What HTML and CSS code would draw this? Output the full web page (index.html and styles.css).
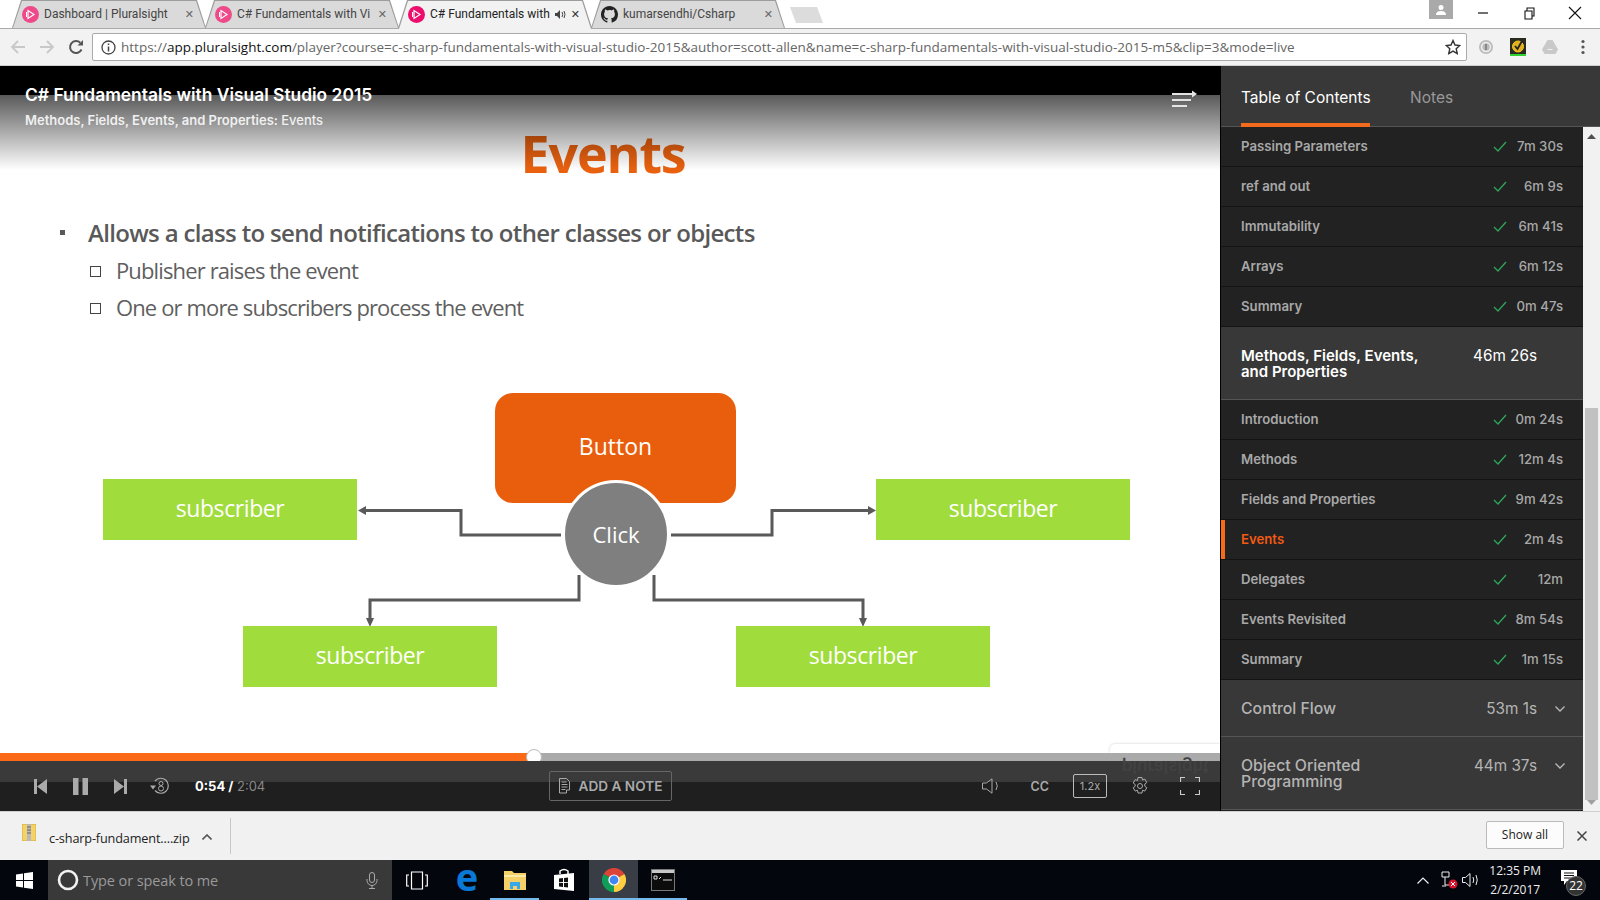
FILE: index.html
```html
<!DOCTYPE html>
<html lang="en">
<head>
<meta charset="utf-8">
<title>C# Fundamentals with Visual Studio 2015</title>
<link rel="stylesheet" href="styles.css">
</head>
<body>
<div class="tabstrip">
  <div class="tab">
    <svg class="favicon" width="17" height="17" viewBox="0 0 17 17"><circle cx="8.5" cy="8.5" r="8.5" fill="#ee4a8a"/><path d="M6 4.5v8l6-4z" fill="none" stroke="#fff" stroke-width="1.2"/><path d="M4.5 6v5" stroke="#fff"/></svg>
    <span class="tab-title">Dashboard | Pluralsight</span><span class="tab-x">✕</span>
  </div>
  <div class="tab">
    <svg class="favicon" width="17" height="17" viewBox="0 0 17 17"><circle cx="8.5" cy="8.5" r="8.5" fill="#ee4a8a"/><path d="M6 4.5v8l6-4z" fill="none" stroke="#fff" stroke-width="1.2"/><path d="M4.5 6v5" stroke="#fff"/></svg>
    <span class="tab-title">C# Fundamentals with Vi</span><span class="tab-x">✕</span>
  </div>
  <div class="tab tab-active">
    <svg class="favicon" width="17" height="17" viewBox="0 0 17 17"><circle cx="8.5" cy="8.5" r="8.5" fill="#ec0d6c"/><path d="M6 4.5v8l6-4z" fill="none" stroke="#fff" stroke-width="1.2"/><path d="M4.5 6v5" stroke="#fff"/></svg>
    <span class="tab-title">C# Fundamentals with</span>
    <svg class="tab-sound" width="11" height="11" viewBox="0 0 11 11"><path d="M0 4h2l3-3v9L2 7H0z" fill="#444"/><path d="M7 3q1.500 2.500 0 5M9 2q2 3.500 0 7" fill="none" stroke="#444"/></svg>
    <span class="tab-x tab-x-dark">✕</span>
  </div>
  <div class="tab">
    <svg class="favicon" width="17" height="17" viewBox="0 0 16 16"><path fill="#222" d="M8 0C3.580 0 0 3.580 0 8c0 3.540 2.290 6.530 5.470 7.590.4.070.55-.17.55-.38v-1.340c-2.230.48-2.700-1.070-2.700-1.070-.360-.930-.890-1.170-.890-1.170-.730-.500.050-.490.050-.490.800.060 1.230.830 1.230.830.710 1.220 1.870.870 2.330.660.070-.520.280-.870.510-1.070-1.780-.2-3.640-.890-3.640-3.950 0-.870.310-1.590.820-2.150-.080-.2-.360-1.020.080-2.120 0 0 .670-.210 2.200.820A7.600 7.600 0 0 1 8 3.870c.680 0 1.360.090 2 .270 1.530-1.040 2.200-.820 2.200-.820.440 1.100.160 1.920.080 2.120.510.560.820 1.270.820 2.150 0 3.070-1.870 3.750-3.650 3.950.290.250.540.730.540 1.480v2.190c0 .210.150.460.550.380A8 8 0 0 0 16 8c0-4.420-3.580-8-8-8z"/></svg>
    <span class="tab-title">kumarsendhi/Csharp</span><span class="tab-x">✕</span>
  </div>
  <div class="newtab"></div>
  <div class="window-controls">
    <div class="avatar"><svg width="12" height="12" viewBox="0 0 12 12"><circle cx="6" cy="3.500" r="2.500" fill="#fff"/><path d="M1 11q0-4 5-4t5 4z" fill="#fff"/></svg></div>
    <svg class="win-btn" width="46" height="28" viewBox="0 0 46 28"><path d="M18 13h10" stroke="#111" stroke-width="1.200"/></svg>
    <svg class="win-btn" width="46" height="28" viewBox="0 0 46 28"><path d="M19 11h7v8h-7zM21 11V8h7v8h-2" fill="none" stroke="#111" stroke-width="1.100"/></svg>
    <svg class="win-btn" width="46" height="28" viewBox="0 0 46 28"><path d="M17 7l12 12M29 7L17 19" stroke="#111" stroke-width="1.100"/></svg>
  </div>
</div>

<div class="toolbar">
  <svg class="nav-icon" width="16" height="16" viewBox="0 0 16 16"><path d="M15 8H2M8 2L2 8l6 6" fill="none" stroke="#c8c8c8" stroke-width="1.800"/></svg>
  <svg class="nav-icon" width="16" height="16" viewBox="0 0 16 16"><path d="M1 8h13M8 2l6 6-6 6" fill="none" stroke="#c8c8c8" stroke-width="1.800"/></svg>
  <svg class="nav-icon" width="16" height="16" viewBox="0 0 16 16"><path d="M13.500 10.500A6 6 0 1 1 12.300 3.800" fill="none" stroke="#555" stroke-width="2"/><path d="M9.500 6.500H15V1z" fill="#555"/></svg>
  <div class="omnibox">
    <svg class="info" width="15" height="15" viewBox="0 0 15 15"><circle cx="7.500" cy="7.500" r="6.500" fill="none" stroke="#444" stroke-width="1.300"/><path d="M7.500 6.500v5M7.500 3.500v1.600" stroke="#444" stroke-width="1.500"/></svg>
    <span class="url"><span class="url-dim">https://</span>app.pluralsight.com<span class="url-dim">/player?course=c-sharp-fundamentals-with-visual-studio-2015&amp;author=scott-allen&amp;name=c-sharp-fundamentals-with-visual-studio-2015-m5&amp;clip=3&amp;mode=live</span></span>
    <svg class="star" width="16" height="16" viewBox="0 0 16 16"><path d="M8 1.500l2 4.500 4.800.500-3.600 3.200 1 4.800L8 12.100l-4.200 2.400 1-4.800L1.200 6.500 6 6z" fill="none" stroke="#333" stroke-width="1.400"/></svg>
  </div>
  <div class="ext-icons">
    <svg width="16" height="16" viewBox="0 0 16 16"><circle cx="8" cy="8" r="7" fill="#bbb"/><circle cx="8" cy="8" r="4.500" fill="none" stroke="#eee" stroke-width="1.500"/><path d="M8 5v6" stroke="#888" stroke-width="2"/></svg>
    <svg width="16" height="18" viewBox="0 0 16 18"><rect width="16" height="16" fill="#2a2a20"/><rect y="16" width="16" height="2" fill="#2fd02f"/><circle cx="8" cy="8.500" r="5.500" fill="#e0b020" stroke="#f5c518" stroke-width="1"/><path d="M5 8l2.500 3L12 3" fill="none" stroke="#222" stroke-width="1.800"/></svg>
    <svg width="16" height="16" viewBox="0 0 16 16"><path d="M5.500 1h5L16 10.500 13.500 15h-11L0 10.500z" fill="#c9c9c9"/><path d="M5.500 10.500h5" stroke="#f2f2f2"/></svg>
    <svg class="kebab" width="4" height="16" viewBox="0 0 4 16"><circle cx="2" cy="2.500" r="1.600" fill="#555"/><circle cx="2" cy="8" r="1.600" fill="#555"/><circle cx="2" cy="13.500" r="1.600" fill="#555"/></svg>
  </div>
</div>

<div class="main">
  <div class="player">
    <div class="stage">
      <div class="black-strip"></div>
      <div class="slide">
        <h1 class="slide-title">Events</h1>
        <div class="bullet"><span class="bullet-mark"></span>Allows a class to send notifications to other classes or objects</div>
        <div class="sub-bullet"><span class="sub-mark"></span>Publisher raises the event</div>
        <div class="sub-bullet"><span class="sub-mark"></span>One or more subscribers process the event</div>
        <div class="diagram">
          <div class="node-button">Button</div>
          <svg class="wires" width="1220" height="320" viewBox="0 0 1220 320">
            <g fill="none" stroke="#595959" stroke-width="3">
              <path d="M561 155H461V130.500H364"/>
              <path d="M671 155H772V130.500H870"/>
              <path d="M579 195V220H370V240"/>
              <path d="M654 195V220H863V240"/>
            </g>
            <g fill="#595959">
              <path d="M358 130.500l8-4.500v9z"/>
              <path d="M876 130.500l-8-4.500v9z"/>
              <path d="M370 247l-4-9h8z"/>
              <path d="M863 247l-4-9h8z"/>
            </g>
          </svg>
          <div class="node-click">Click</div>
          <div class="sub-node sn-left">subscriber</div>
          <div class="sub-node sn-right">subscriber</div>
          <div class="sub-node sn-bl">subscriber</div>
          <div class="sub-node sn-br">subscriber</div>
        </div>
      </div>
      <div class="shade"></div>
      <div class="course-head">
        <div class="course-title">C# Fundamentals with Visual Studio 2015</div>
        <div class="course-sub">Methods, Fields, Events, and Properties: <span class="course-sub-light">Events</span></div>
      </div>
      <svg class="menu-icon" width="25" height="18" viewBox="0 0 25 18"><g stroke="#e4e4e4" stroke-width="2" fill="none"><path d="M0 5h17M0 11h19M0 17h15M2 5h21"/></g><path d="M25 5l-5-3.500v7z" fill="#e4e4e4"/></svg>
      <div class="ghost-tip"></div>
    </div>
    <div class="progress"><div class="progress-done"></div><div class="knob"></div></div>
    <div class="controls">
      <div class="ghost-text">pluralsight</div>
      <svg class="c-prev" width="13" height="15" viewBox="0 0 13 15"><path d="M0 0h3v15H0zM13 0v15L3 7.500z" fill="#aaa"/></svg>
      <svg class="c-pause" width="15" height="17" viewBox="0 0 15 17"><path d="M0 0h5.500v17H0zM9.500 0H15v17H9.500z" fill="#aaa"/></svg>
      <svg class="c-next" width="13" height="15" viewBox="0 0 13 15"><path d="M13 0h-3v15h3zM0 0v15l10-7.500z" fill="#aaa"/></svg>
      <svg class="c-replay" width="20" height="18" viewBox="0 0 20 18"><path d="M5 13.500A7.500 7.500 0 1 0 5 4" fill="none" stroke="#aaa" stroke-width="1.200"/><path d="M0 8.500h6l-3 4z" fill="#aaa"/><circle cx="11" cy="6.500" r="2" fill="none" stroke="#aaa"/><circle cx="11" cy="11.500" r="2.500" fill="none" stroke="#aaa"/></svg>
      <div class="time"><b>0:54 /</b> <span class="time-total">2:04</span></div>
      <button class="add-note">
        <svg width="12" height="16" viewBox="0 0 12 16"><path d="M.5.500h7l3 3V12h-3v3H.5zM2.500 4h5M2.500 6.500h6M2.500 9h6M2.500 11.500h4" fill="none" stroke="#aaa"/></svg>
        ADD A NOTE
      </button>
      <div class="c-right">
        <svg width="19" height="16" viewBox="0 0 19 16"><path d="M.5 5h4L10 .8v14.400L4.500 11h-4zM14 4q2.500 4 0 8" fill="none" stroke="#aaa"/></svg>
        <span class="cc">CC</span>
        <span class="speed">1.2x</span>
        <svg width="18" height="18" viewBox="0 0 18 18"><path d="M7 .5h4l.5 2.500 2.300-.9 2 3.400-2 1.500v2.200l2 1.500-2 3.400-2.300-.9-.5 2.800H7l-.5-2.800-2.300.9-2-3.400 2-1.500V7.500l-2-1.500 2-3.400 2.300.9z" fill="none" stroke="#aaa"/><circle cx="9" cy="9" r="2.500" fill="none" stroke="#aaa"/></svg>
        <svg width="20" height="18" viewBox="0 0 20 18"><path d="M.5 5V.5H5M15 .5h4.500V5M19.500 13v4.500H15M5 17.500H.5V13" fill="none" stroke="#ccc" stroke-width="1.200"/></svg>
      </div>
    </div>
  </div>

  <aside class="sidebar">
    <div class="side-tabs">
      <div class="side-tab side-tab-on">Table of Contents</div>
      <div class="side-tab">Notes</div>
    </div>
    <div class="side-body">
      <div class="toc">
        <div class="row"><span class="row-name">Passing Parameters</span><svg class="check" width="14" height="11" viewBox="0 0 14 11"><path d="M1 6l4 4 8-9" fill="none" stroke="#2ea55e" stroke-width="1.300"/></svg><span class="row-time">7m 30s</span></div>
        <div class="row"><span class="row-name">ref and out</span><svg class="check" width="14" height="11" viewBox="0 0 14 11"><path d="M1 6l4 4 8-9" fill="none" stroke="#2ea55e" stroke-width="1.300"/></svg><span class="row-time">6m 9s</span></div>
        <div class="row"><span class="row-name">Immutability</span><svg class="check" width="14" height="11" viewBox="0 0 14 11"><path d="M1 6l4 4 8-9" fill="none" stroke="#2ea55e" stroke-width="1.300"/></svg><span class="row-time">6m 41s</span></div>
        <div class="row"><span class="row-name">Arrays</span><svg class="check" width="14" height="11" viewBox="0 0 14 11"><path d="M1 6l4 4 8-9" fill="none" stroke="#2ea55e" stroke-width="1.300"/></svg><span class="row-time">6m 12s</span></div>
        <div class="row"><span class="row-name">Summary</span><svg class="check" width="14" height="11" viewBox="0 0 14 11"><path d="M1 6l4 4 8-9" fill="none" stroke="#2ea55e" stroke-width="1.300"/></svg><span class="row-time">0m 47s</span></div>
        <div class="section section-open">
          <span class="section-name">Methods, Fields, Events, and Properties</span>
          <span class="section-time">46m 26s</span>
          <span class="chev-space"></span>
        </div>
        <div class="row"><span class="row-name">Introduction</span><svg class="check" width="14" height="11" viewBox="0 0 14 11"><path d="M1 6l4 4 8-9" fill="none" stroke="#2ea55e" stroke-width="1.300"/></svg><span class="row-time">0m 24s</span></div>
        <div class="row"><span class="row-name">Methods</span><svg class="check" width="14" height="11" viewBox="0 0 14 11"><path d="M1 6l4 4 8-9" fill="none" stroke="#2ea55e" stroke-width="1.300"/></svg><span class="row-time">12m 4s</span></div>
        <div class="row"><span class="row-name">Fields and Properties</span><svg class="check" width="14" height="11" viewBox="0 0 14 11"><path d="M1 6l4 4 8-9" fill="none" stroke="#2ea55e" stroke-width="1.300"/></svg><span class="row-time">9m 42s</span></div>
        <div class="row row-current"><span class="row-name">Events</span><svg class="check" width="14" height="11" viewBox="0 0 14 11"><path d="M1 6l4 4 8-9" fill="none" stroke="#2ea55e" stroke-width="1.300"/></svg><span class="row-time">2m 4s</span></div>
        <div class="row"><span class="row-name">Delegates</span><svg class="check" width="14" height="11" viewBox="0 0 14 11"><path d="M1 6l4 4 8-9" fill="none" stroke="#2ea55e" stroke-width="1.300"/></svg><span class="row-time">12m</span></div>
        <div class="row"><span class="row-name">Events Revisited</span><svg class="check" width="14" height="11" viewBox="0 0 14 11"><path d="M1 6l4 4 8-9" fill="none" stroke="#2ea55e" stroke-width="1.300"/></svg><span class="row-time">8m 54s</span></div>
        <div class="row"><span class="row-name">Summary</span><svg class="check" width="14" height="11" viewBox="0 0 14 11"><path d="M1 6l4 4 8-9" fill="none" stroke="#2ea55e" stroke-width="1.300"/></svg><span class="row-time">1m 15s</span></div>
        <div class="section">
          <span class="section-name">Control Flow</span>
          <span class="section-time">53m 1s</span>
          <svg class="chev" width="10" height="6" viewBox="0 0 10 6"><path d="M.5.500L5 5 9.500.500" fill="none" stroke="#bbb" stroke-width="1.300"/></svg>
        </div>
        <div class="section">
          <span class="section-name">Object Oriented Programming</span>
          <span class="section-time">44m 37s</span>
          <svg class="chev" width="10" height="6" viewBox="0 0 10 6"><path d="M.5.500L5 5 9.500.500" fill="none" stroke="#bbb" stroke-width="1.300"/></svg>
        </div>
      </div>
      <div class="scrollbar">
        <svg class="sb-arrow" width="9" height="5" viewBox="0 0 9 5"><path d="M4.500 0L9 5H0z" fill="#505050"/></svg>
        <div class="sb-gap"></div>
        <div class="sb-thumb"></div>
        <svg class="sb-arrow" width="9" height="5" viewBox="0 0 9 5"><path d="M4.500 5L9 0H0z" fill="#a0a0a0"/></svg>
      </div>
    </div>
  </aside>
</div>

<div class="downloads">
  <svg class="zip" width="14" height="17" viewBox="0 0 14 17"><rect width="14" height="17" fill="#f3d268"/><rect x="0" y="0" width="14" height="17" fill="none" stroke="#d6ae3f"/><rect x="5" y="0" width="4" height="17" fill="#b9b9b9"/><path d="M5 3h4M5 6h4M5 9h4" stroke="#666"/></svg>
  <span class="dl-name">c-sharp-fundament....zip</span>
  <svg class="dl-caret" width="10" height="6" viewBox="0 0 10 6"><path d="M.5 5.500L5 1l4.500 4.500" fill="none" stroke="#555" stroke-width="1.600"/></svg>
  <span class="dl-sep"></span>
  <button class="show-all">Show all</button>
  <svg class="dl-close" width="10" height="10" viewBox="0 0 10 10"><path d="M.5.500l9 9M9.500.500l-9 9" stroke="#444" stroke-width="1.500"/></svg>
</div>

<div class="taskbar">
  <svg class="start" width="17" height="17" viewBox="0 0 17 17"><path d="M0 2.500l7-1v6.500H0zM8 1.300L17 0v8H8zM0 9h7v6.500l-7-1zM8 9h9v8l-9-1.300z" fill="#fff"/></svg>
  <div class="search">
    <svg width="22" height="22" viewBox="0 0 22 22"><circle cx="11" cy="11" r="9" fill="none" stroke="#f2f2f2" stroke-width="2.600"/></svg>
    <span class="search-text">Type or speak to me</span>
    <svg class="mic" width="12" height="17" viewBox="0 0 12 17"><rect x="3.500" y=".5" width="5" height="10" rx="2.500" fill="none" stroke="#aaa"/><path d="M1 7v1.500a5 5 0 0 0 10 0V7M6 13.500V16M3 16.500h6" fill="none" stroke="#aaa"/></svg>
  </div>
  <div class="task-item"><svg width="22" height="19" viewBox="0 0 22 19"><path d="M5.500 1h11v17h-11zM3 4H.7v11H3M19 4h2.300v11H19" fill="none" stroke="#fff" stroke-width="1.200"/></svg></div>
  <div class="task-item task-edge"><span class="edge-e">e</span></div>
  <div class="task-item task-run"><svg width="22" height="22" viewBox="0 0 22 22"><path d="M0 2h8l2 2h12v17H0z" fill="#f5cf67"/><path d="M0 6h22v2H0z" fill="#fbe9a9"/><path d="M6 20v-7h10v7h-3v-3H9v3z" fill="#38a8e8"/></svg></div>
  <div class="task-item"><svg width="22" height="24" viewBox="0 0 22 24"><path d="M1 7l20-2v18L1 21z" fill="#fff"/><path d="M7 6V3q4-3 8 0v3" fill="none" stroke="#fff" stroke-width="1.500"/><path d="M6 10.500l4-.4v4l-4 .1zM11 10l4-.4v4.400l-4 .1zM6 15l4-.1v4L6 18.500zM11 14.900l4-.1v4.600l-4-.4z" fill="#111"/></svg></div>
  <div class="task-item task-chrome task-run">
    <svg width="24" height="24" viewBox="0 0 24 24"><path d="M12 12L1.600 6A12 12 0 0 1 22.400 6z" fill="#db4437"/><path d="M12 12L22.400 6A12 12 0 0 1 12 24z" fill="#ffcd40"/><path d="M12 12V24A12 12 0 0 1 1.600 6z" fill="#0f9d58"/><circle cx="12" cy="12" r="5.600" fill="#fff"/><circle cx="12" cy="12" r="4.400" fill="#4285f4"/></svg>
  </div>
  <div class="task-item task-cmd task-run">
    <svg width="24" height="24" viewBox="0 0 24 24"><rect x=".5" y="1.500" width="23" height="21" fill="#0c0c0c" stroke="#777"/><rect x="1" y="2" width="22" height="3" fill="#c8c8c8"/><path d="M3 8h3v3H3zM8 11l2-2M12 12h9" stroke="#ddd" fill="none"/></svg>
  </div>
  <div class="tray">
    <svg width="12" height="7" viewBox="0 0 12 7"><path d="M.5 6.500L6 1l5.500 5.500" fill="none" stroke="#eee" stroke-width="1.200"/></svg>
    <svg class="tray-net" width="17" height="18" viewBox="0 0 17 18"><path d="M1 1h7v5H1zM4 6v8h6M1 15h4" fill="none" stroke="#eee"/><circle cx="12" cy="13" r="4.500" fill="#d4162c"/><path d="M10 11l4 4M14 11l-4 4" stroke="#fff"/></svg>
    <svg class="tray-vol" width="18" height="16" viewBox="0 0 18 16"><path d="M.5 5.500h3L8 1.500v13l-4.500-4h-3zM11 5q1.500 3 0 6M14 3q2.500 5 0 10" fill="none" stroke="#eee"/></svg>
    <div class="clock"><div>12:35 PM</div><div>2/2/2017</div></div>
    <div class="notify">
      <svg width="16" height="15" viewBox="0 0 16 15"><path d="M0 0h16v11H6l-3 4v-4H0z" fill="#fff"/><path d="M3 3h10M3 5.500h10M3 8h7" stroke="#111"/></svg>
      <span class="notify-badge">22</span>
    </div>
  </div>
</div>
</body>
</html>
```

FILE: styles.css
```css
* { box-sizing: border-box; }
html, body { margin: 0; padding: 0; }
body {
  width: 1600px;
  height: 900px;
  overflow: hidden;
  display: flex;
  flex-direction: column;
  background: #fff;
  font-family: "Open Sans", "Liberation Sans", sans-serif;
}

/* Browser tabs */
.tabstrip {
  height: 28px;
  flex: none;
  display: flex;
  align-items: stretch;
  padding-left: 12px;
  background: #fff;
}
.tab {
  position: relative;
  width: 194px;
  margin-right: -1px;
  flex: none;
  display: flex;
  align-items: center;
  padding: 0 12px 0 10px;
  font-family: Roboto, "Liberation Sans", sans-serif;
  font-size: 12px;
  color: #444;
}
.tab::before {
  content: "";
  position: absolute;
  inset: 0;
  z-index: 0;
  background: #9c9c9c;
  clip-path: polygon(0 100%, 9px 0, calc(100% - 9px) 0, 100% 100%);
}
.tab::after {
  content: "";
  position: absolute;
  inset: 1px 1px 0 1px;
  z-index: 0;
  background: #dadada;
  clip-path: polygon(0 100%, 9px 0, calc(100% - 9px) 0, 100% 100%);
}
.tab > * { position: relative; z-index: 1; }
.tab-active { color: #222; z-index: 2; }
.tab-active::after { background: #f2f2f2; inset: 1px 1px -1px 1px; }
.favicon { flex: none; margin-right: 5px; }
.tab-title { flex: 1; white-space: nowrap; overflow: hidden; }
.tab-sound { flex: none; margin-right: 5px; }
.tab-x { flex: none; font-size: 11px; color: #666; font-family: "DejaVu Sans", sans-serif; }
.tab-x-dark { color: #333; }
.newtab {
  width: 33px;
  height: 16px;
  margin: 7px 0 0 6px;
  background: #dcdcdc;
  clip-path: polygon(0 0, calc(100% - 6px) 0, 100% 100%, 6px 100%);
}
.window-controls {
  margin-left: auto;
  display: flex;
  align-items: flex-start;
  padding-right: 2px;
}
.avatar {
  width: 24px;
  height: 19px;
  margin-right: 7px;
  background: #a9a9a9;
  display: flex;
  align-items: center;
  justify-content: center;
}
.win-btn { display: block; }

/* Toolbar */
.toolbar {
  height: 38px;
  flex: none;
  display: flex;
  align-items: center;
  padding-left: 10px;
  background: #f2f2f2;
  border-top: 1px solid #aaa;
  border-bottom: 1px solid #d0d0d0;
  gap: 13px;
}
.nav-icon { flex: none; }
.omnibox {
  width: 1375px;
  height: 28px;
  margin-left: -5px;
  flex: none;
  display: flex;
  align-items: center;
  padding: 0 5px 0 8px;
  background: #fff;
  border: 1px solid #aaa;
  border-radius: 2px;
}
.info { flex: none; margin-right: 5px; }
.url {
  flex: 1;
  white-space: nowrap;
  overflow: hidden;
  font-size: 13.5px;
  color: #111;
}
.url-dim { color: #666; }
.star { flex: none; }
.ext-icons {
  display: flex;
  align-items: center;
  gap: 16px;
  margin-left: -2px;
}
.kebab { margin-left: 7px; }

/* Main */
.main {
  flex: 1;
  min-height: 0;
  display: flex;
}
.player {
  width: 1220px;
  flex: none;
  display: flex;
  flex-direction: column;
  background: #000;
}
.stage {
  position: relative;
  flex: 1;
  min-height: 0;
  display: flex;
  flex-direction: column;
  overflow: hidden;
}
.black-strip { height: 29px; flex: none; background: #000; }
.slide {
  flex: 1;
  min-height: 0;
  background: #fff;
  color: #595959;
  font-family: "Open Sans", "Liberation Sans", sans-serif;
}
.slide-title {
  margin: 25px 14px 0 0;
  height: 66px;
  text-align: center;
  font-size: 52px;
  line-height: 66px;
  font-weight: 700;
  color: #e9610f;
  letter-spacing: -1.2px;
}
.bullet {
  margin-top: 29px;
  padding-left: 60px;
  height: 34px;
  display: flex;
  align-items: center;
  font-size: 24px;
  font-weight: 600;
  letter-spacing: -.67px;
  white-space: nowrap;
}
.bullet-mark {
  width: 5px;
  height: 5px;
  margin-right: 23px;
  background: #595959;
}
.sub-bullet {
  margin-top: 4px;
  padding-left: 90px;
  height: 34px;
  display: flex;
  align-items: center;
  font-size: 22px;
  letter-spacing: -.87px;
  color: #5f5f5f;
  white-space: nowrap;
}
.sub-bullet + .sub-bullet { margin-top: 3px; }
.sub-mark {
  width: 11px;
  height: 11px;
  margin: 3px 15px 0 0;
  border: 1.5px solid #444;
}
.diagram {
  position: relative;
  width: 1220px;
  height: 320px;
  margin-top: 56px;
}
.wires { position: absolute; left: 0; top: 0; }
.node-button {
  position: absolute;
  left: 495px;
  top: 13px;
  width: 241px;
  height: 110px;
  padding-top: 37px;
  text-align: center;
  background: #e95e0c;
  border-radius: 18px;
  color: #fff;
  font-size: 23px;
  line-height: 32px;
}
.node-click {
  position: absolute;
  left: 562px;
  top: 100px;
  width: 108px;
  height: 108px;
  display: flex;
  align-items: center;
  justify-content: center;
  border: 3px solid #fff;
  border-radius: 50%;
  background: #7f7f7f;
  color: #fff;
  font-size: 22px;
}
.sub-node {
  position: absolute;
  width: 254px;
  height: 61px;
  padding-bottom: 4px;
  display: flex;
  align-items: center;
  justify-content: center;
  background: #a0dc3c;
  color: #fff;
  font-size: 23px;
  letter-spacing: -.4px;
}
.sn-left { left: 103px; top: 99px; }
.sn-right { left: 876px; top: 99px; }
.sn-bl { left: 243px; top: 246px; }
.sn-br { left: 736px; top: 246px; }

.shade {
  position: absolute;
  left: 0;
  right: 0;
  top: 29px;
  height: 75px;
  background: linear-gradient(rgba(0,0,0,.65), rgba(0,0,0,0));
}
.course-head {
  position: absolute;
  left: 25px;
  top: 17px;
  color: #fff;
  font-family: Inter, "Liberation Sans", sans-serif;
}
.course-title { font-size: 17.4px; font-weight: 600; line-height: 24px; white-space: nowrap; }
.course-sub { margin-top: 3px; font-size: 13px; font-weight: 600; line-height: 20px; white-space: nowrap; color: #f0f0f0; }
.course-sub-light { font-weight: 500; }
.menu-icon { position: absolute; left: 1172px; top: 23px; }
.ghost-tip {
  position: absolute;
  right: 0;
  bottom: 0;
  width: 110px;
  height: 9px;
  background: #fff;
  border-top-left-radius: 5px;
  box-shadow: 0 0 3px rgba(0,0,0,.2);
}

.progress {
  position: relative;
  height: 8px;
  flex: none;
  background: #aaa;
}
.progress-done { width: 534px; height: 100%; background: #fb6a17; }
.knob {
  position: absolute;
  left: 526px;
  top: -4px;
  width: 16px;
  height: 16px;
  border-radius: 50%;
  background: #fff;
  border: 1px solid #bbb;
}
.controls {
  position: relative;
  height: 50px;
  flex: none;
  display: flex;
  align-items: center;
  padding: 0 20px 0 34px;
  background: linear-gradient(#3a3a3a 21px, #1f1f1f 21px);
  color: #aaa;
  font-family: Inter, "Liberation Sans", sans-serif;
}
.ghost-text {
  position: absolute;
  left: 1122px;
  top: -4px;
  font-size: 17px;
  font-weight: 600;
  color: #424242;
  transform: scaleY(-1);
}
.c-prev { flex: none; }
.c-pause { flex: none; margin-left: 26px; }
.c-next { flex: none; margin-left: 26px; }
.c-replay { flex: none; margin-left: 23px; }
.time { margin-left: 25px; width: 100px; font-size: 13px; white-space: nowrap; }
.time b { color: #fff; font-weight: 700; }
.time-total { color: #888; }
.add-note {
  margin-left: 254px;
  width: 123px;
  height: 30px;
  display: flex;
  align-items: center;
  justify-content: center;
  gap: 8px;
  background: transparent;
  border: 1px solid #666;
  border-radius: 2px;
  color: #aaa;
  font-family: Inter, "Liberation Sans", sans-serif;
  font-size: 13.6px;
  font-weight: 600;
  white-space: nowrap;
  padding: 0;
}
.c-right {
  margin-left: auto;
  display: flex;
  align-items: center;
  gap: 31px;
}
.cc { font-size: 12.5px; font-weight: 600; margin-right: -7px; margin-left: -1px; }
.speed {
  width: 34px;
  height: 24px;
  display: flex;
  align-items: center;
  justify-content: center;
  border: 1px solid #bbb;
  border-radius: 2px;
  font-size: 11px;
  margin-right: -7px;
}

/* Sidebar */
.sidebar {
  flex: 1;
  min-width: 0;
  display: flex;
  flex-direction: column;
  border-left: 1px solid #000;
  background: #222;
  font-family: Inter, "Liberation Sans", sans-serif;
}
.side-tabs {
  height: 61px;
  flex: none;
  display: flex;
  gap: 40px;
  padding-left: 20px;
  background: #383838;
  border-bottom: 1px solid #555;
}
.side-tab {
  height: 61px;
  padding-top: 20px;
  font-size: 15.5px;
  line-height: 24px;
  color: #999;
}
.side-tab-on { color: #fff; border-bottom: 4px solid #f26a1b; width: 129px; white-space: nowrap; }
.side-body { flex: 1; min-height: 0; display: flex; }
.toc { width: 362px; flex: none; }
.row {
  position: relative;
  height: 40px;
  display: flex;
  align-items: center;
  padding: 0 20px 1px;
  border-bottom: 1px solid #141414;
  font-size: 13.2px;
  font-weight: 500;
  color: #a8a8a8;
}
.row-name { flex: 1; font-weight: 600; }
.check { flex: none; }
.row-time { width: 56px; text-align: right; flex: none; }
.row-current .row-name { color: #f05a14; }
.row-current::before {
  content: "";
  position: absolute;
  left: 0;
  top: 0;
  bottom: 0;
  width: 4px;
  background: #fb6a17;
}
.section {
  display: flex;
  align-items: flex-start;
  padding: 21px 18px 19px 20px;
  background: #383838;
  border-bottom: 1px solid #555;
  font-size: 15.8px;
  line-height: 16px;
  font-weight: 500;
  color: #b4b4b4;
}
.section-open { color: #fff; font-size: 15px; font-weight: 600; }
.section-name { width: 190px; flex: none; }
.section-time { flex: 1; text-align: right; font-weight: 400; font-size: 15.3px; }
.chev-space { width: 28px; flex: none; }
.chev { width: 10px; height: 6px; flex: none; margin: 5px 0 0 18px; }
.scrollbar {
  flex: 1;
  display: flex;
  flex-direction: column;
  align-items: center;
  padding: 7px 0 5px;
  background: #f1f1f1;
}
.sb-gap { height: 269px; flex: none; }
.sb-thumb { width: 13px; height: 392px; flex: none; background: #c1c1c1; }
.sb-arrow { flex: none; display: block; }

/* Downloads */
.downloads {
  height: 49px;
  flex: none;
  display: flex;
  align-items: center;
  padding-left: 22px;
  background: #f1f1f1;
  border-top: 1px solid #d0d0d0;
  color: #222;
  font-size: 12.7px;
}
.zip { flex: none; margin-top: -7px; }
.dl-name { margin: 4px 0 0 13px; width: 145px; white-space: nowrap; letter-spacing: -.15px; }
.dl-caret { flex: none; margin: 1px 0 0 8px; }
.dl-sep { width: 1px; height: 36px; margin-left: 18px; background: #c8c8c8; }
.show-all {
  margin: -3px 0 0 auto;
  width: 78px;
  height: 28px;
  background: #fcfcfc;
  border: 1px solid #bbb;
  border-radius: 2px;
  font-family: "Open Sans", "Liberation Sans", sans-serif;
  font-size: 12px;
  color: #222;
  padding: 0;
}
.dl-close { flex: none; margin: 0 13px 0 13px; }

/* Taskbar */
.taskbar {
  height: 40px;
  flex: none;
  display: flex;
  align-items: center;
  background: #04060d;
  color: #fff;
}
.start { flex: none; margin: 0 15px 0 16px; }
.search {
  width: 344px;
  height: 40px;
  flex: none;
  display: flex;
  align-items: center;
  padding-left: 9px;
  background: #393939;
}
.search-text { margin-left: 4px; font-size: 14.5px; color: #9a9a9a; letter-spacing: -.1px; }
.mic { margin-left: auto; margin-right: 14px; flex: none; }
.task-item {
  position: relative;
  width: 49px;
  height: 40px;
  flex: none;
  display: flex;
  align-items: center;
  justify-content: center;
}
.task-run::after {
  content: "";
  position: absolute;
  left: 0;
  right: 0;
  bottom: 0;
  height: 2px;
  background: #76b9ed;
}
.task-chrome { background: #393d45; margin-left: 1px; }
.edge-e {
  font-size: 38px;
  line-height: 36px;
  font-weight: 700;
  color: #0a78d7;
  margin: -8px 0 0 3px;
}
.tray {
  margin-left: auto;
  display: flex;
  align-items: center;
  gap: 6px;
  padding-right: 17px;
}
.tray-net { margin-left: 6px; }
.tray-vol { margin-left: -2px; }
.clock {
  margin-left: 3px;
  text-align: center;
  font-size: 12px;
  line-height: 19px;
  color: #eee;
  white-space: nowrap;
}
.notify { position: relative; width: 22px; height: 24px; margin-left: 14px; }
.notify-badge {
  position: absolute;
  left: 5px;
  top: 8px;
  width: 20px;
  height: 20px;
  border-radius: 50%;
  background: #333;
  border: 1px solid #666;
  text-align: center;
  font-size: 12px;
  line-height: 18px;
  color: #fff;
}
```
